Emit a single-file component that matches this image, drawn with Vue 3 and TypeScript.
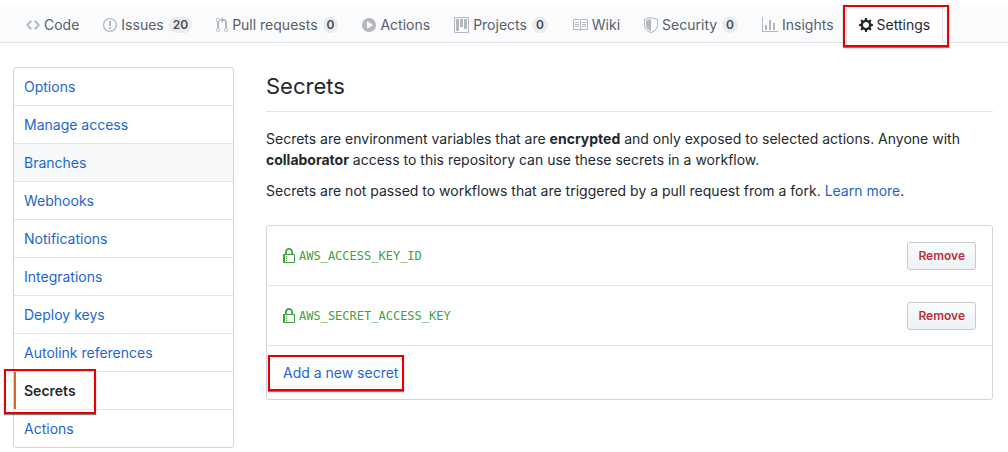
<script setup lang="ts">
interface Tab {
  label: string
  width: number
  path: string
  count?: number
  active?: boolean
}

const tabs: Tab[] = [
  { label: 'Code', width: 14, path: 'M9.5 3L8 4.5 11.5 8 8 11.5 9.5 13 14 8 9.5 3zm-5 0L0 8l4.5 5L6 11.5 2.5 8 6 4.5 4.5 3z' },
  { label: 'Issues', width: 14, count: 20, path: 'M7 2.3c3.14 0 5.7 2.56 5.7 5.7s-2.56 5.7-5.7 5.7A5.71 5.71 0 0 1 1.3 8c0-3.14 2.56-5.7 5.7-5.7zM7 1C3.14 1 0 4.14 0 8s3.14 7 7 7 7-3.14 7-7-3.14-7-7-7zm1 3H6v5h2V4zm0 6H6v2h2v-2z' },
  { label: 'Pull requests', width: 12, count: 0, path: 'M11 11.28V5c-.03-.78-.34-1.47-.94-2.06C9.46 2.35 8.78 2.03 8 2H7V0L4 3l3 3V4h1c.27.02.48.11.69.31.21.2.3.42.31.69v6.28A1.993 1.993 0 0 0 10 15a1.993 1.993 0 0 0 1-3.72zm-1 2.92c-.66 0-1.2-.55-1.2-1.2 0-.65.55-1.2 1.2-1.2.65 0 1.2.55 1.2 1.2 0 .65-.55 1.2-1.2 1.2zM4 3c0-1.11-.89-2-2-2a1.993 1.993 0 0 0-1 3.72v6.56A1.993 1.993 0 0 0 2 15a1.993 1.993 0 0 0 1-3.72V4.72c.59-.34 1-.98 1-1.72zm-.8 10c0 .66-.55 1.2-1.2 1.2-.65 0-1.2-.55-1.2-1.2 0-.65.55-1.2 1.2-1.2.65 0 1.2.55 1.2 1.2zM2 4.2C1.34 4.2.8 3.65.8 3c0-.65.55-1.2 1.2-1.2.65 0 1.2.55 1.2 1.2 0 .65-.55 1.2-1.2 1.2z' },
  { label: 'Actions', width: 14, path: 'M14 8A7 7 0 1 1 0 8a7 7 0 0 1 14 0zm-8.223 3.482l4.599-3.066a.5.5 0 0 0 0-.832L5.777 4.518A.5.5 0 0 0 5 4.934v6.132a.5.5 0 0 0 .777.416z' },
  { label: 'Projects', width: 15, count: 0, path: 'M10 12h3V2h-3v10zm-4-2h3V2H6v8zm-4 4h3V2H2v12zm-1 1h13V1H1v14zM14 0H1a1 1 0 0 0-1 1v14a1 1 0 0 0 1 1h13a1 1 0 0 0 1-1V1a1 1 0 0 0-1-1z' },
  { label: 'Wiki', width: 16, path: 'M3 5h4v1H3V5zm0 3h4V7H3v1zm0 2h4V9H3v1zm11-5h-4v1h4V5zm0 2h-4v1h4V7zm0 2h-4v1h4V9zm2-6v9c0 .55-.45 1-1 1H9.5l-1 1-1-1H2c-.55 0-1-.45-1-1V3c0-.55.45-1 1-1h5.5l1 1 1-1H15c.55 0 1 .45 1 1zm-8 .5L7.5 3H2v9h6V3.5zm7-.5H9.5l-.5.5V12h6V3z' },
  { label: 'Security', width: 14, count: 0, path: 'M0 2l7-2 7 2v6.02C14 12.69 8.69 16 7 16c-1.69 0-7-3.31-7-7.98V2zm1 .75L7 1l6 1.75v5.268C13 12.104 8.449 15 7 15c-1.449 0-6-2.896-6-6.982V2.75zm1 .75L7 2v12c-1.207 0-5-2.482-5-5.985V3.5z' },
  { label: 'Insights', width: 16, path: 'M16 14v1H0V0h1v14h15zM5 13H3V8h2v5zm4 0H7V3h2v10zm4 0h-2V6h2v7z' },
  { label: 'Settings', width: 14, active: true, path: 'M14 8.77v-1.6l-1.94-.64-.45-1.09.88-1.84-1.13-1.13-1.81.91-1.09-.45-.69-1.92h-1.6l-.63 1.94-1.11.45-1.84-.88-1.13 1.13.91 1.81-.45 1.09L0 7.23v1.59l1.94.64.45 1.09-.88 1.84 1.13 1.13 1.81-.91 1.09.45.69 1.92h1.59l.63-1.94 1.11-.45 1.84.88 1.13-1.13-.92-1.81.47-1.09L14 8.75v.02zM7 11c-1.66 0-3-1.34-3-3s1.34-3 3-3 3 1.34 3 3-1.34 3-3 3z' },
]

const menu: string[] = [
  'Options', 'Manage access', 'Branches', 'Webhooks', 'Notifications',
  'Integrations', 'Deploy keys', 'Autolink references', 'Secrets', 'Actions',
]
const current = 'Secrets'
const hovered = 'Branches'

const secrets: string[] = ['AWS_ACCESS_KEY_ID', 'AWS_SECRET_ACCESS_KEY']

const lockPath = 'M4 13H3v-1h1v1zm8-6v7c0 .55-.45 1-1 1H1c-.55 0-1-.45-1-1V7c0-.55.45-1 1-1h1V4c0-2.2 1.8-4 4-4s4 1.8 4 4v2h1c.55 0 1 .45 1 1zM3.8 6h4.41V4c0-1.22-.98-2.2-2.2-2.2-1.22 0-2.2.98-2.2 2.2v2H3.8zM11 7H2v7h9V7zM4 8H3v1h1V8zm0 2H3v1h1v-1z'
</script>

<template>
  <div class="page">
    <nav class="tabs" aria-label="Repository">
      <a v-for="tab in tabs" :key="tab.label" href="#" class="tab" :class="{ active: tab.active }">
        <svg class="tab-icon" :width="tab.width" height="16" :viewBox="`0 0 ${tab.width} 16`" aria-hidden="true">
          <path fill-rule="evenodd" :d="tab.path" />
        </svg>
        <span>{{ tab.label }}</span>
        <span v-if="tab.count !== undefined" class="counter">{{ tab.count }}</span>
        <span v-if="tab.active" class="marker marker-tab"></span>
      </a>
    </nav>

    <div class="layout">
      <nav class="menu" aria-label="Settings">
        <a
          v-for="item in menu"
          :key="item"
          href="#"
          class="menu-item"
          :class="{ current: item === current, hovered: item === hovered }"
        >
          {{ item }}
          <span v-if="item === current" class="marker marker-menu"></span>
        </a>
      </nav>

      <main class="content">
        <h1 class="title">Secrets</h1>
        <p class="text">
          Secrets are environment variables that are <strong>encrypted</strong> and only exposed to selected actions.
          Anyone with <strong>collaborator</strong> access to this repository can use these secrets in a workflow.
        </p>
        <p class="text">
          Secrets are not passed to workflows that are triggered by a pull request from a fork.
          <a href="#" class="link">Learn more</a>.
        </p>

        <ul class="box">
          <li v-for="secret in secrets" :key="secret" class="row">
            <span class="secret">
              <svg width="12" height="16" viewBox="0 0 12 16" aria-hidden="true">
                <path fill-rule="evenodd" :d="lockPath" />
              </svg>
              <code class="secret-name">{{ secret }}</code>
            </span>
            <button type="button" class="remove">Remove</button>
          </li>
          <li class="row add-row">
            <a href="#" class="link add">Add a new secret<span class="marker marker-add"></span></a>
          </li>
        </ul>
      </main>
    </div>
  </div>
</template>

<style>
body {
  background: #fff;
}
</style>

<style scoped>
.page,
.page * {
  box-sizing: border-box;
}

.page {
  padding-top: 5px;
  color: #24292e;
  font-family: Inter, "Liberation Sans", sans-serif;
  font-size: 14px;
  line-height: 21px;
}

a {
  color: #1b66d2;
  text-decoration: none;
}

.tabs {
  display: flex;
  height: 38px;
  padding: 0 14px;
  background: #fafbfc;
  border-bottom: 1px solid #e1e4e8;
}

.tab {
  position: relative;
  display: flex;
  align-items: center;
  height: 38px;
  padding: 0 11px;
  border: 1px solid transparent;
  border-bottom: 0;
  color: #586069;
  white-space: nowrap;
}

.tab.active {
  padding: 0 12px;
  background: #fff;
  border-color: #e1e4e8;
  color: #24292e;
}

.tab-icon {
  flex: none;
  margin-right: 4px;
  fill: #b4b8bc;
}

.active .tab-icon {
  fill: #24292e;
}

.counter {
  margin-left: 5px;
  padding: 2px 4px;
  border-radius: 20px;
  background: #e9ebed;
  color: #444d56;
  font-size: 12px;
  font-weight: 600;
  line-height: 12px;
  text-align: center;
}

.marker {
  position: absolute;
  z-index: 1;
  border: 2px solid #e60000;
  box-shadow: 0 1px 1px rgba(0, 0, 0, 0.5);
  pointer-events: none;
}

.marker-tab {
  inset: -1px -7px -4px -4px;
}

.marker-menu {
  top: -3px;
  bottom: -5px;
  left: -10px;
  width: 92px;
}

.marker-add {
  inset: -7px -6px -8px -15px;
}

.layout {
  display: flex;
  align-items: flex-start;
  gap: 32px;
  padding: 24px 15px 4px 13px;
}

.menu {
  flex: none;
  width: 221px;
  border: 1px solid #d1d5da;
  border-radius: 3px;
}

.menu-item {
  position: relative;
  display: block;
  padding: 8px 10px;
  border-bottom: 1px solid #e1e4e8;
}

.menu-item:last-child {
  border-bottom: 0;
}

.hovered {
  background: #f6f8fa;
}

.current {
  color: #24292e;
  font-weight: 600;
}

.current::before {
  content: "";
  position: absolute;
  top: 0;
  bottom: 0;
  left: 0;
  width: 2px;
  background: #d9692b;
}

.content {
  flex: 1;
  min-width: 0;
}

.title {
  margin: 0 0 16px;
  padding: 1px 0 7px;
  border-bottom: 1px solid #e1e4e8;
  font-size: 22px;
  font-weight: 400;
  line-height: 36px;
}

.text {
  margin: 0 0 10px;
}

.link {
  color: #1b66d2;
}

.box {
  margin: 24px 0 0;
  padding: 0;
  border: 1px solid #d1d5da;
  border-radius: 3px;
  list-style: none;
}

.row {
  display: flex;
  align-items: center;
  justify-content: space-between;
  padding: 16px 16px 15px;
  border-bottom: 1px solid #e1e4e8;
}

.add-row {
  padding: 16px;
  border-bottom: 0;
}

.secret {
  display: flex;
  align-items: center;
  gap: 4px;
  color: #3fa142;
}

.secret svg {
  fill: #3fa142;
}

.secret-name {
  font-family: "DejaVu Sans Mono", "Liberation Mono", monospace;
  font-size: 12px;
}

.remove {
  padding: 3px 10px;
  border: 1px solid #c6cacd;
  border-radius: 3px;
  background: linear-gradient(#fafbfc, #eff3f6 90%);
  color: #bf2f39;
  font-family: inherit;
  font-size: 12px;
  font-weight: 600;
  line-height: 20px;
}

.add {
  position: relative;
}
</style>
